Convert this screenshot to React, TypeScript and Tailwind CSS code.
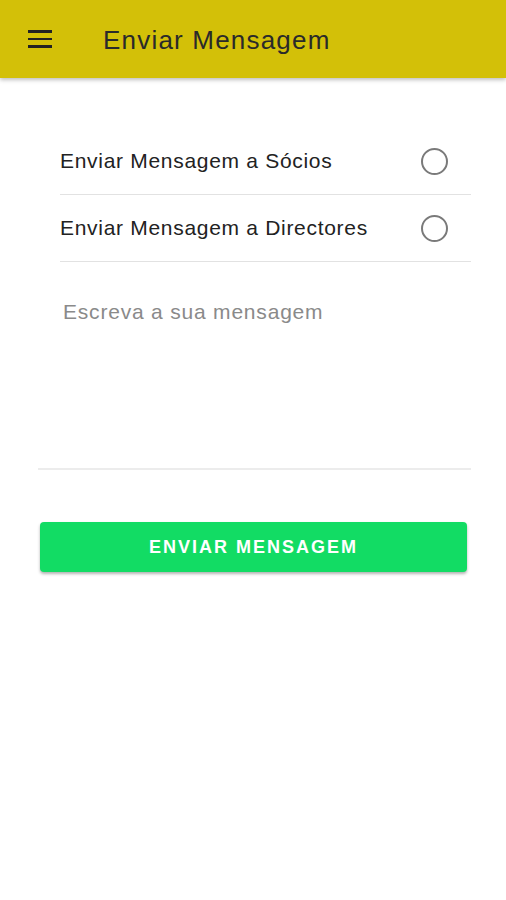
export default function App() {
  return (
    <div className="min-h-[900px] w-[506px] bg-white" style={{ fontFamily: '"Liberation Sans", Arial, sans-serif' }}>
      {/* Top app bar */}
      <header className="flex h-[78px] items-center bg-[#d3c008] shadow-[0_2px_4px_rgba(0,0,0,0.25)]">
        <div className="ml-[28px] flex w-[24px] flex-col gap-[5px]">
          <span className="block h-[2.5px] bg-[#222]" />
          <span className="block h-[2.5px] bg-[#222]" />
          <span className="block h-[2.5px] bg-[#222]" />
        </div>
        <h1 className="ml-[51px] mt-[3px] text-[26px] tracking-[1.2px] text-[#2a2a2a]">Enviar Mensagem</h1>
      </header>

      <main className="pt-[50px]">
        <div className="ml-[60px] mr-[35px]">
          {['Enviar Mensagem a Sócios', 'Enviar Mensagem a Directores'].map((label) => (
            <div key={label} className="flex h-[67px] items-center justify-between border-b border-[#e2e2e2] pr-[23px]">
              <span className="text-[21px] tracking-[0.7px] text-[#222]">{label}</span>
              <span className="block h-[27px] w-[27px] rounded-full border-2 border-[#7a7a7a]" />
            </div>
          ))}
        </div>

        <div className="ml-[38px] mr-[35px] mt-[34px] h-[174px] border-b-2 border-[#ececec]">
          <p className="ml-[25px] text-[21px] tracking-[0.8px] text-[#8a8a8a]">Escreva a sua mensagem</p>
        </div>

        <div className="mx-[40px] mr-[39px] mt-[52px]">
          <button className="flex h-[50px] w-full items-center justify-center rounded-[4px] bg-[#12dc64] text-[18px] font-bold tracking-[2px] text-white shadow-[0_2px_3px_rgba(0,0,0,0.3)]">
            ENVIAR MENSAGEM
          </button>
        </div>
      </main>
    </div>
  );
}
